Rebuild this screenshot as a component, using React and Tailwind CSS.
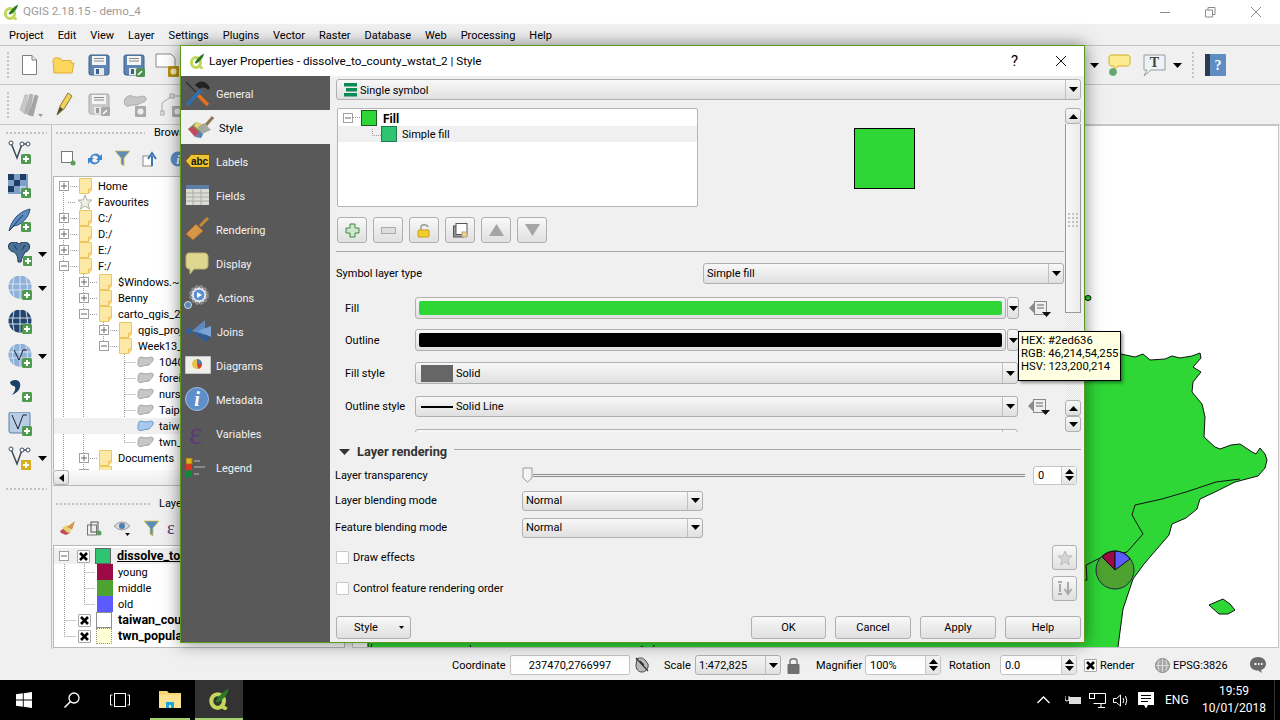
import React from 'react';

const S = ({ w, h, vb, className = '', children }) => (
  <svg width={w} height={h} viewBox={vb || `0 0 ${w} ${h}`} className={`shrink-0 ${className}`}>{children}</svg>
);
const Tri = ({ w = 9, h = 5, c = '#000', up }) => (
  <S w={w} h={h}><path d={up ? `M0 ${h}H${w}L${w / 2} 0Z` : `M0 0H${w}L${w / 2} ${h}Z`} fill={c} /></S>
);
const Plus = ({ x, y }) => (
  <g><rect x={x} y={y} width="10" height="10" rx="1.5" fill="#4e9a4e" /><path d={`M${x + 5} ${y + 2}v6M${x + 2} ${y + 5}h6`} stroke="#fff" strokeWidth="2" /></g>
);
const Grip = ({ className }) => (
  <div className={`bg-[radial-gradient(circle,#c2c2c2_1px,transparent_1.2px)] bg-[length:4px_4px] ${className}`} />
);
const Logo = ({ s = 16 }) => (
  <S w={s} h={s} vb="0 0 16 16">
    <ellipse cx="7" cy="9.500" rx="4.600" ry="5" fill="none" stroke="#c3d75a" strokeWidth="3" />
    <path d="M9 12.500l4.500 3" stroke="#c3d75a" strokeWidth="2.800" />
    <path d="M5.500 10C7 6.500 10.500 3 15 0.500C14.500 4.500 11.500 8 7.500 10.500Z" fill="#2a7a28" />
  </S>
);

/* toolbar icons */
const NewDoc = () => <S w={17} h={22}><path d="M1.500 1.500H11L15.500 6V20.500H1.500Z" fill="#fff" stroke="#7d7d7d" /><path d="M11 1.500V6H15.500" fill="#eee" stroke="#7d7d7d" /></S>;
const Folder = () => <S w={23} h={17}><path d="M1 3.500L2.500 1H8L10 3.500H19V6H22L20 16H2Z" fill="#fbd75b" stroke="#dcae30" /></S>;
const Save = ({ gray, badge }) => (
  <S w={23} h={23}>
    <rect x="1" y="1" width="20" height="20" rx="2" fill={gray ? '#c9c9c9' : '#5d86b6'} stroke={gray ? '#aaa' : '#3d5f88'} />
    <rect x="4" y="2" width="14" height="9" fill="#f4f4f4" /><path d="M6 4.500h10M6 7h10" stroke="#888" />
    <rect x="6" y="14" width="10" height="7" fill="#e8e8e8" /><rect x="8" y="15" width="3" height="5" fill={gray ? '#999' : '#3d5f88'} />
    {badge && <g><rect x="13" y="14" width="9" height="9" rx="1.500" fill={badge} /><path d="M15 21l4-4" stroke="#fff" strokeWidth="1.500" /></g>}
  </S>
);
const Composer = () => <S w={25} h={24}><path d="M1 1H16L20 5V14H1Z" fill="#fff" stroke="#888" /><rect x="13" y="13" width="11" height="11" rx="1" fill="#b78f12" /><circle cx="18.500" cy="18.500" r="3" fill="#f4e7b2" /></S>;
const Pencils = () => <S w={24} h={25}><path d="M1 18L6 3L9 3L6 22Z" fill="#c8c8c8" stroke="#aaa" strokeWidth="0.500" /><path d="M6 21L11 2L14 3L10 23Z" fill="#b5b5b5" stroke="#999" strokeWidth="0.500" /><path d="M10 23L16 3L19 4L14 24Z" fill="#a5a5a5" stroke="#888" strokeWidth="0.500" /><path d="M19 22h5l-2.500 3z" fill="#999" /></S>;
const Pencil = () => <S w={17} h={25}><path d="M1 23L4 14L12 1L16 4L8 17Z" fill="#f0d35c" stroke="#8a7a30" /><path d="M1 23L4 15L7 17Z" fill="#444" /></S>;
const Blob = ({ f = '#c6c6c6', s = '#a5a5a5', w = 17, h = 12 }) => <S w={w} h={h} vb="0 0 17 12"><path d="M2 2C5 0 6 2 9 2C12 2 14 0 16 2C17 5 14 6 13 8C12 10 8 9 6 10C3 11 1 11 1 8C1 6 1 4 2 2Z" fill={f} stroke={s} /></S>;
const GrayBlob = () => <S w={24} h={24}><path d="M2 6C5 1 9 3 12 4C16 5 21 1 23 5C24 9 19 9 16 11C13 13 9 11 6 13C3 14 0 11 2 6Z" fill="#c6c6c6" stroke="#aaa" /><rect x="12" y="13" width="11" height="11" rx="1" fill="#aaa" /><circle cx="17.500" cy="18.500" r="3" fill="#eee" /></S>;
const Poly = () => <S w={24} h={24}><path d="M2 20V10L12 3H20" fill="none" stroke="#aaa" /><rect x="0" y="18" width="4" height="4" fill="#ddd" stroke="#aaa" /><rect x="10" y="1" width="4" height="4" fill="#ddd" stroke="#aaa" /><rect x="12" y="13" width="11" height="11" rx="1" fill="#aaa" /><circle cx="17.500" cy="18.500" r="3" fill="#eee" /></S>;
const Note = () => <S w={23} h={23}><path d="M4 1H19C21 1 22 2 22 4V9C22 11 21 12 19 12H10L6 17V12H4C2 12 1 11 1 9V4C1 2 2 1 4 1Z" fill="#fbeb91" stroke="#d4ae24" /><circle cx="5" cy="18" r="3.500" fill="#6f9f72" stroke="#5b7" /></S>;
const TNote = () => <S w={23} h={23}><path d="M1 1H22V16H8L1 22L4 16H1Z" fill="#eef3f6" stroke="#9a9a9a" /><text x="11.500" y="13" textAnchor="middle" fontFamily="Liberation Serif" fontWeight="700" fontSize="14" fill="#444">T</text></S>;
const HelpBook = () => <S w={21} h={22}><rect x="0" y="0" width="21" height="22" rx="1" fill="#5f8dc2" /><rect width="5" height="22" fill="#2b3b50" /><text x="13" y="16" textAnchor="middle" fontSize="14" fontWeight="700" fontFamily="Liberation Serif" fill="#fff">?</text></S>;

/* left bar */
const VNode = ({ badge = true, star }) => <S w={24} h={24}><path d="M3 3L9 18L14 4H20" fill="none" stroke="#3a4a5a" strokeWidth="1.500" /><circle cx="3" cy="3" r="2" fill="#fff" stroke="#3a4a5a" /><circle cx="14" cy="4" r="2" fill="#fff" stroke="#3a4a5a" /><circle cx="20" cy="4" r="2" fill="#fff" stroke="#3a4a5a" />{badge && !star && <Plus x={13} y={14} />}{star && <g><rect x="13" y="14" width="10" height="10" fill="#d8ad1e" /><path d="M18 16v6M15 19h6" stroke="#fff" strokeWidth="2" /></g>}</S>;
const Raster = () => <S w={24} h={24}><rect x="0" y="0" width="20" height="20" fill="#7ea0c8" /><rect x="0" y="0" width="6" height="6" fill="#1f3d63" /><rect x="12" y="0" width="6" height="6" fill="#1f3d63" /><rect x="6" y="6" width="6" height="6" fill="#1f3d63" /><rect x="0" y="12" width="6" height="6" fill="#1f3d63" /><rect x="12" y="12" width="6" height="6" fill="#b8cbe3" /><Plus x={13} y={14} /></S>;
const Feather = () => <S w={24} h={24}><path d="M1 23C3 14 9 4 22 1C21 9 14 17 6 18Z" fill="#5d8ac0" stroke="#2d4e78" /><path d="M2 22L15 7" stroke="#1f3d63" /><Plus x={13} y={14} /></S>;
const Elephant = () => <S w={24} h={24}><path d="M1 2C4 -1 9 0 11 2C13 0 18 -1 21 2C23 6 20 10 17 10C16 13 14 14 13 20L10 20C10 14 8 12 6 10C3 10 -1 7 1 2Z" fill="#4a7096" stroke="#1f3a58" /><path d="M6 3L9 8M17 3L14 8" stroke="#1f3a58" fill="none" /><Plus x={15} y={14} /></S>;
const Globe = ({ light, v }) => <S w={24} h={24}><circle cx="12" cy="11" r="11.500" fill={light ? '#8fb0d8' : '#21456f'} /><path d="M1 8h22M1 14h22M12 0v22M6 1Q3 11 6 21M18 1Q21 11 18 21" fill="none" stroke={light ? '#e7eef6' : '#fff'} strokeWidth="0.800" />{v && <path d="M6 6L11 16L15 6H19" fill="none" stroke="#223" />}<Plus x={14} y={14} /></S>;
const Comma = () => <S w={24} h={24}><path d="M2 4C6 0 14 2 12 9C11 13 8 15 4 17C8 12 8 9 6 8C4 8 2 6 2 4Z" fill="#1c3f66" /><Plus x={14} y={14} /></S>;
const Mesh = () => <S w={24} h={24}><rect x="1" y="0" width="21" height="21" rx="2" fill="#b7cde4" stroke="#5a7fa8" /><path d="M4 3L10 17L15 3H19" fill="none" stroke="#223" /><Plus x={14} y={14} /></S>;

/* sidebar */
const IGeneral = () => <S w={26} h={26}><path d="M1 2L12 13" stroke="#333" strokeWidth="1.500" /><path d="M11 13L23 25" stroke="#e8701f" strokeWidth="3.500" /><path d="M2 25L16 10" stroke="#2f6fb0" strokeWidth="3.500" /><path d="M10 5C14 0 21 0 25 8L23 10C20 7 17 7 15 9Z" fill="#222" /></S>;
const IStyle = () => <S w={27} h={23}><path d="M1 13L9 6L20 10L14 22Z" fill="#6ea15e" /><path d="M1 13L6 10L12 16L8 21Z" fill="#c24a5f" /><path d="M9 6L17 9L13 14L7 10Z" fill="#e5d36b" /><path d="M8 21L13 15L16 18L14 22Z" fill="#5d7fb4" /><path d="M15 18L11 11L17 7L24 14Z" fill="#a6a8a2" /><path d="M19 9L26 1" stroke="#8a7a50" strokeWidth="3" /></S>;
const ILabels = () => <S w={25} h={14}><path d="M0.500 7L6 0.500H24.500V13.500H6Z" fill="#efc233" stroke="#6f5a12" /><text x="14.500" y="10.500" textAnchor="middle" fontSize="10" fontWeight="700" fontFamily="Liberation Sans" fill="#111">abc</text></S>;
const IFields = () => <S w={23} h={20}><rect width="23" height="20" fill="#ddddd6" /><rect width="23" height="4" fill="#5c7ea6" /><path d="M0 8h23M0 12h23M0 16h23M7 4v16M15 4v16" stroke="#aaa" /></S>;
const IRendering = () => <S w={24} h={24}><path d="M15 9L23 1" stroke="#c98a3a" strokeWidth="3" /><path d="M1 17L11 7L18 14L8 23Z" fill="#d7954a" stroke="#a5682a" /></S>;
const IDisplay = () => <S w={24} h={23}><path d="M4 1H19C22 1 23 3 23 5V13C23 16 21 17 19 17H9L5 22L5 17H4C2 17 1 15 1 13V5C1 3 2 1 4 1Z" fill="#e0d78e" stroke="#bfb56e" /></S>;
const IActions = () => <S w={26} h={25}><circle cx="15" cy="10" r="8.500" fill="#ddd" stroke="#888" strokeWidth="3" strokeDasharray="3 1.500" /><circle cx="15" cy="10" r="6" fill="#5c8fd0" stroke="#fff" /><path d="M13 7L18 10L13 13Z" fill="#fff" /><circle cx="4" cy="20" r="3.500" fill="#5c86b8" stroke="#cdd" /></S>;
const IJoins = () => <S w={26} h={24}><circle cx="3" cy="12" r="3" fill="#355f95" /><path d="M6 12L19 1V23Z" fill="#5d88c2" /><path d="M12 12L25 7V18Z" fill="#7da4d6" /><path d="M6 12L19 23L25 18Z" fill="#2f5a92" /></S>;
const IDiagrams = () => <S w={26} h={18}><rect width="26" height="18" fill="#efefea" stroke="#999" /><circle cx="12" cy="8" r="5" fill="#e6c24c" /><path d="M12 8V3A5 5 0 0 1 17 8Z" fill="#4f78b8" /><path d="M12 8H17A5 5 0 0 1 13 13Z" fill="#c9432f" /></S>;
const IMeta = () => <S w={24} h={24}><circle cx="12" cy="12" r="11.500" fill="#5f8fcb" stroke="#9dbde3" /><text x="12" y="19" textAnchor="middle" fontFamily="Liberation Serif" fontStyle="italic" fontWeight="700" fontSize="20" fill="#fff">i</text></S>;
const ILegend = () => <S w={19} h={19}><rect x="0" y="0" width="6" height="6" fill="#e0b020" stroke="#a58010" /><rect x="0" y="6" width="6" height="6" fill="#d8381c" /><rect x="0" y="13" width="6" height="6" fill="#0b8a3c" /><path d="M8 3h6M8 9h11M8 16h5" stroke="#8a8a8a" strokeWidth="2" /></S>;

const sideItems = [
  ['General', <IGeneral />, 'pl-[4px]', 'w-[35px]'],
  ['Style', <IStyle />, 'pl-[6px]', 'w-[38px]'],
  ['Labels', <ILabels />, 'pl-[4px]', 'w-[35px]'],
  ['Fields', <IFields />, 'pl-[5px]', 'w-[35px]'],
  ['Rendering', <IRendering />, 'pl-[4px]', 'w-[35px]'],
  ['Display', <IDisplay />, 'pl-[4px]', 'w-[35px]'],
  ['Actions', <IActions />, 'pl-[3px]', 'w-[36px]'],
  ['Joins', <IJoins />, 'pl-[5px]', 'w-[36px]'],
  ['Diagrams', <IDiagrams />, 'pl-[4px]', 'w-[35px]'],
  ['Metadata', <IMeta />, 'pl-[4px]', 'w-[35px]'],
  ['Variables', <span className="font-['Liberation_Serif',serif] text-[32px] leading-none text-[#5a3a78]">ε</span>, 'pl-[8px]', 'w-[35px]'],
  ['Legend', <ILegend />, 'pl-[5px]', 'w-[35px]'],
];

const btn = 'bg-linear-to-b from-[#f8f8f8] to-[#e0e0e0] border border-[#b0b0b0] rounded-[3px]';

const Combo = ({ className = '', children }) => (
  <div className={`flex items-center ${btn} ${className}`}>
    <div className="flex-1 flex items-center min-w-0 pl-[3px] pt-[2px] whitespace-nowrap overflow-hidden">{children}</div>
    <div className="w-[15px] h-full border-l border-[#c0c0c0] flex items-center justify-center"><Tri /></div>
  </div>
);
const Spin = ({ className = '', children }) => (
  <div className={`flex items-center bg-white border border-[#c4c4c4] rounded-[3px] ${className}`}>
    <div className="flex-1 pl-[4px] pt-[2px]">{children}</div>
    <div className="w-[15px] h-full border-l border-[#c8c8c8] bg-linear-to-b from-[#f8f8f8] to-[#e4e4e4] flex flex-col items-center justify-around py-[2px]">
      <Tri up /><Tri />
    </div>
  </div>
);
const Exp = ({ open }) => (
  <S w={10} h={10} className="mr-[0px]"><rect x="0.500" y="0.500" width="9" height="9" fill="#fff" stroke="#a0a0a0" /><path d={open ? 'M2 5h6' : 'M2 5h6M5 2v6'} stroke="#666" /></S>
);
const TreeFolder = () => <S w={13} h={16}><path d="M0.500 0.500H12.500V12L9.500 15.500H0.500Z" fill="#fde9a6" stroke="#ecc75e" /><path d="M9.500 15.500V11H12.500" fill="#f8d878" stroke="#ecc75e" /></S>;
const Star = () => <S w={16} h={16}><path d="M8 1L10 6H15L11 9.500L12.500 15L8 12L3.500 15L5 9.500L1 6H6Z" fill="#efefe6" stroke="#b0b0a0" /></S>;

const bRows = [
  ['Home', 0, '+'], ['Favourites', 0, 's'], ['C:/', 0, '+'], ['D:/', 0, '+'], ['E:/', 0, '+'], ['F:/', 0, '-'],
  ['$Windows.~BT', 1, '+'], ['Benny', 1, '+'], ['carto_qgis_2018', 1, '-'], ['qgis_project', 2, '+'], ['Week13_pie', 2, '-'],
  ['1040_population', 3, 'b'], ['foreign_workers', 3, 'b'], ['nursery_school', 3, 'b'], ['Taipei_metro', 3, 'b'], ['taiwan_county', 3, 'h'], ['twn_population', 3, 'b'],
  ['Documents', 1, '+'], ['Downloads', 1, '+'],
];
const bPad = ['pl-[5px]', 'pl-[25px]', 'pl-[45px]', 'pl-[83px]'];

const BrowserTree = () => (
  <div className="relative h-[294px] overflow-hidden bg-white border-t border-l border-[#b8b8b8] pt-[1px] ml-[1px] shrink-0">
    <svg width="300" height="294" className="absolute left-0 top-0" viewBox="54 177 300 294" fill="none" stroke="#9a9a9a" strokeDasharray="1 1">
      <path d="M63.500 190V262M63.500 272V470M68 186.500H78M68 202.500H76M68 218.500H78M68 234.500H78M68 250.500H78M68 266.500H78" />
      <path d="M83.500 272V470M88 282.500H98M88 298.500H98M88 314.500H98M88 458.500H98M103.500 320V350M108 330.500H118M108 346.500H118" />
      <path d="M124.500 352V442.500M124.500 362.500H136M124.500 378.500H136M124.500 394.500H136M124.500 410.500H136M124.500 426.500H136M124.500 442.500H136" />
    </svg>
    {bRows.map(([t, l, k]) => (
      <div key={t} className={`relative h-4 flex items-center whitespace-nowrap ${bPad[l]} ${k === 'h' ? 'bg-[#f0f0f0]' : ''}`}>
        {(k === '+' || k === '-') && <><Exp open={k === '-'} /><span className="ml-[10px]"><TreeFolder /></span><span className="ml-[6px] mt-[2px]">{t}</span></>}
        {k === 's' && <><span className="ml-[18px]"><Star /></span><span className="ml-[5px] mt-[2px]">{t}</span></>}
        {(k === 'b' || k === 'h') && <><Blob f={k === 'h' ? '#a9c9ec' : '#c6c6c6'} s={k === 'h' ? '#6a95c4' : '#a5a5a5'} /><span className="ml-[5px] mt-[2px]">{t}</span></>}
      </div>
    ))}
  </div>
);

const Check = () => (
  <span className="w-[13px] h-[13px] border border-[#a8a8a8] bg-white flex items-center justify-center shrink-0 rounded-[1px]">
    <S w={9} h={9}><path d="M1 1L8 8M8 1L1 8" stroke="#000" strokeWidth="2.600" /></S>
  </span>
);

const lRows = [
  ['dissolve_to_county_wstat_2', 'top'], ['young', 'l', 'bg-[#9b0a45]'], ['middle', 'l', 'bg-[#4ea22f]'], ['old', 'l', 'bg-[#5b5bff]'],
  ['taiwan_county', 'c', 'bg-white border border-[#8f8f8f]'], ['twn_population', 'c', 'bg-[#ffffd8] border border-dotted border-[#8f8f8f]'],
];
const LayerTree = () => (
  <div className="relative h-[103px] overflow-hidden bg-white border border-[#b8b8b8] pt-[2px] ml-[1px] shrink-0">
    <svg width="120" height="104" className="absolute left-0 top-0" viewBox="54 546 120 104" fill="none" stroke="#9a9a9a" strokeDasharray="1 1">
      <path d="M64.500 562V636.500M64.500 620.500H76M64.500 636.500H76M69 556.500H77M84.500 562V604.500M84.500 572.500H95M84.500 588.500H95M84.500 604.500H95" />
    </svg>
    {lRows.map(([t, k, c]) => (
      <div key={t} className={`relative h-4 flex items-center whitespace-nowrap ${k === 'top' ? 'bg-[#f0f0f0]' : ''}`}>
        {k === 'top' && <><span className="ml-[5px]"><Exp open /></span><span className="ml-[8px]"><Check /></span><span className="ml-[5px] w-4 h-4 bg-[#2fc472] border border-[#666] shrink-0" /><span className="ml-[6px] font-bold underline text-[12.500px]">{t}</span></>}
        {k === 'l' && <><span className={`ml-[43px] w-4 h-4 shrink-0 ${c}`} /><span className="ml-[5px] mt-[2px]">{t}</span></>}
        {k === 'c' && <><span className="ml-[24px]"><Check /></span><span className={`ml-[5px] w-4 h-4 shrink-0 ${c}`} /><span className="ml-[6px] font-bold text-[12.500px]">{t}</span></>}
      </div>
    ))}
  </div>
);

const MapCanvas = () => (
  <div className="flex-1 bg-white border border-[#c4c4c4] mr-[1px] ml-[7px] mb-px overflow-hidden">
    <svg width="925" height="524" viewBox="353 124 925 524" className="block">
      <path d="M368 660L368 600L700 340L1084 356L1121 352L1135 355L1143 352L1150 358L1165 357L1172 354L1180 356L1192 354L1200 351L1201 356L1193 365L1201 370L1193 380L1192 390L1202 402L1205 415L1204 435L1215 445L1220 447L1231 443L1240 442L1252 450L1256 452L1260 446L1265 452L1267 458L1265 466L1258 474L1235 480L1215 490L1200 497L1197 507L1186 516L1172 522L1169 533L1156 548L1144 562L1133 577L1123 607L1116 660Z" fill="#2ed636" stroke="#111" />
      <path d="M1240 477L1216 480L1186 490L1162 497L1135 503L1132 513L1143 532L1127 550L1102 555L1086 563L1087 578L1083 578" fill="none" stroke="#111" />
      <path d="M1209 603L1216 600L1223 597L1230 602L1235 608L1228 612L1219 612Z" fill="#2ed636" stroke="#111" />
      <ellipse cx="1088" cy="296" rx="3" ry="2.500" fill="#2ed636" stroke="#111" />
      <path d="M472 648l-2-5M635 648l8-4M653 648l1-5M370 648l2-6" fill="none" stroke="#111" />
      <circle cx="1115" cy="568" r="19" fill="#4ea22f" stroke="#224" />
      <path d="M1115 568L1102 555A19 19 0 0 1 1115 549Z" fill="#9b0a45" stroke="#111" />
      <path d="M1115 568V549A19 19 0 0 1 1130 557Z" fill="#5b5bff" stroke="#111" />
    </svg>
  </div>
);

const Row = ({ label, labelClass = 'pl-[9px] w-[79px]', children, className = '' }) => (
  <div className={`flex items-center ${className}`}>
    <span className={`shrink-0 mt-[2px] ${labelClass}`}>{label}</span>{children}
  </div>
);
const DD = () => (
  <S w={24} h={17} className="ml-[9px]"><path d="M1 8L7 2V14Z" fill="#8a8a8a" /><rect x="6.500" y="1.500" width="12" height="13" fill="#eee" stroke="#888" /><path d="M9 5h7M9 8h7" stroke="#666" /><path d="M14 12h9l-4.500 5z" fill="#111" /></S>
);
const ColorBtn = ({ c }) => (
  <>
    <div className={`w-[591px] h-[22px] p-[3px] ${btn}`}><div className={`h-full rounded-[2px] ${c}`} /></div>
    <div className={`ml-[1px] w-[12px] h-[22px] flex items-center justify-center ${btn}`}><Tri /></div>
    <DD />
  </>
);
const ToolBtn = ({ children }) => (
  <div className={`w-[30px] h-[26px] flex items-center justify-center ${btn}`}>{children}</div>
);
const Btn = ({ children, className = '' }) => (
  <div className={`h-[23px] flex items-center justify-center pt-[2px] ${btn} ${className}`}>{children}</div>
);

const Dialog = () => (
  <div className="absolute left-[180px] top-[45px] w-[905px] h-[598px] border border-[#5c9a1e] bg-[#f0f0f0] shadow-[0_0_16px_rgba(0,0,0,0.5)] flex flex-col">
    <div className="h-[30px] bg-white flex items-center shrink-0">
      <span className="ml-[8px]"><Logo /></span>
      <span className="ml-[4px] text-[11.700px] mt-[2px]">Layer Properties - dissolve_to_county_wstat_2 | Style</span>
      <span className="ml-auto mr-[37px] text-[15px]">?</span>
      <S w={12} h={12} className="mr-[17px]"><path d="M1 1L11 11M11 1L1 11" stroke="#111" /></S>
    </div>
    <div className="flex-1 flex min-h-0">
      <div className="w-[149px] bg-[#595959] shrink-0">
        {sideItems.map(([t, ic, pad, w]) => (
          <div key={t} className={`h-[34px] flex items-center ${t === 'Style' ? 'bg-[#f0f0f0] text-black' : 'text-[#f2f2f2]'}`}>
            <div className={`flex items-center shrink-0 h-full ${pad} ${w}`}>{ic}</div><span className="mt-[4px]">{t}</span>
          </div>
        ))}
      </div>
      <div className="flex-1 flex flex-col pl-[6px] pr-[3px] min-w-0">
        <div className={`mt-[3px] h-[21px] flex items-center ${btn}`}>
          <div className="flex-1 flex items-center pl-[7px]">
            <S w={13} h={14}><path d="M0 0h13v3.500H0zM2 5h11v3.500H2zM0 10h13v3.500H0z" fill="#0a8a55" /></S>
            <span className="ml-[3px] mt-[3px]">Single symbol</span>
          </div>
          <div className="w-[15px] h-full border-l border-[#c0c0c0] flex items-center justify-center"><Tri /></div>
        </div>
        {/* scroll area */}
        <div className="mt-[8px] h-[324px] flex shrink-0">
          <div className="w-[729px] flex flex-col overflow-hidden">
            <div className="flex h-[99px] shrink-0">
              <div className="w-[361px] ml-[1px] bg-white border border-[#b4b4b4] rounded-[2px] pt-[1px] relative">
                <div className="h-4 flex items-center">
                  <span className="ml-[5px]"><Exp open /></span>
                  <S w={8} h={4}><path d="M0 1.500h8" stroke="#999" strokeDasharray="1 1" /></S>
                  <span className="w-4 h-4 bg-[#2ed636] border border-[#1c5a20]" />
                  <span className="ml-[6px] mt-[1px] font-bold text-[12px]">Fill</span>
                </div>
                <div className="h-4 flex items-center bg-[#f0f0f0]">
                  <S w={9} h={10} className="ml-[34px]"><path d="M0.500 0V6.500H9" stroke="#999" strokeDasharray="1 1" fill="none" /></S>
                  <span className="w-4 h-4 bg-[#2fc472] border border-[#1f7a50]" />
                  <span className="ml-[5px] mt-[2px]">Simple fill</span>
                </div>
              </div>
              <div className="ml-[156px] mt-[20px] w-[61px] h-[61px] bg-[#2ed636] border border-black" />
            </div>
            <div className="mt-[10px] flex gap-[6px] ml-[1px] shrink-0">
              <ToolBtn><S w={15} h={15}><path d="M5 1h5v4h4v5h-4v4H5v-4H1V5h4Z" fill="#cfe6cf" stroke="#3f8a3f" /></S></ToolBtn>
              <ToolBtn><S w={15} h={7}><rect x="0.500" y="0.500" width="14" height="6" fill="#ddd" stroke="#aaa" /></S></ToolBtn>
              <ToolBtn><S w={14} h={15}><path d="M4 7V4C4 1 10 1 11 4" fill="none" stroke="#999" strokeWidth="1.500" /><rect x="1" y="7" width="11" height="7" rx="1" fill="#f3cc2e" stroke="#c79d16" /></S></ToolBtn>
              <ToolBtn><S w={15} h={15}><rect x="0.500" y="3" width="10" height="11" fill="#999" stroke="#555" /><rect x="3" y="0.500" width="11" height="11" fill="#fff" stroke="#555" /><rect x="9" y="9" width="5" height="5" fill="#efd674" stroke="#b99" /></S></ToolBtn>
              <ToolBtn><S w={15} h={12}><path d="M7.500 0L15 12H0Z" fill="#a5a5a5" /></S></ToolBtn>
              <ToolBtn><S w={15} h={12}><path d="M7.500 12L15 0H0Z" fill="#a5a5a5" /></S></ToolBtn>
            </div>
            <div className="mt-[8px] h-px bg-[#a8a8a8] shrink-0" />
            <Row label="Symbol layer type" labelClass="w-[367px]" className="mt-[11px] h-[21px] shrink-0">
              <Combo className="w-[361px] h-[21px]">Simple fill</Combo>
            </Row>
            <Row label="Fill" className="mt-[13px] h-[22px] shrink-0"><ColorBtn c="bg-[#2ed636]" /></Row>
            <Row label="Outline" className="mt-[10px] h-[22px] shrink-0"><ColorBtn c="bg-black" /></Row>
            <Row label="Fill style" className="mt-[11px] h-[22px] shrink-0">
              <Combo className="w-[603px] h-[22px]"><span className="w-[32px] h-[17px] bg-[#666] ml-[2px] mr-[3px] -mt-[2px]" />Solid</Combo>
            </Row>
            <Row label="Outline style" className="mt-[12px] h-[21px] shrink-0">
              <Combo className="w-[603px] h-[21px]"><span className="w-[32px] h-[2px] bg-black ml-[2px] mr-[3px] -mt-[2px]" />Solid Line</Combo>
              <DD />
            </Row>
            <Row label="" className="mt-[12px] h-[21px] shrink-0"><Combo className="w-[603px] h-[21px]">&nbsp;</Combo></Row>
          </div>
          {/* scrollbar */}
          <div className="w-[16px] ml-[1px] flex flex-col shrink-0">
            <div className={`h-[16px] flex items-center justify-center ${btn}`}><Tri up /></div>
            <div className="h-[189px] w-full bg-linear-to-r from-[#f8f8f8] to-[#ebebeb] border-x border-b border-[#999] flex items-end justify-center pb-[84px]">
              <Grip className="w-[12px] h-[16px]" />
            </div>
            <div className="flex-1 bg-[repeating-conic-gradient(#e4e4e4_0_25%,#f6f6f6_0_50%)] bg-[length:2px_2px]" />
            <div className={`h-[16px] flex items-center justify-center ${btn}`}><Tri up /></div>
            <div className={`h-[16px] flex items-center justify-center ${btn}`}><Tri /></div>
          </div>
        </div>
        {/* layer rendering */}
        <div className="mt-[12px] h-[16px] flex items-center shrink-0 -ml-[3px]">
          <span className="ml-[6px]"><Tri w={11} h={6} c="#333" /></span>
          <span className="ml-[7px] font-bold text-[#333] text-[12.800px]">Layer rendering</span>
          <div className="ml-[7px] flex-1 h-px bg-[#a8a8a8] -mt-[6px]" />
        </div>
        <div className="flex flex-col -ml-[1px] shrink-0">
          <Row label="Layer transparency" labelClass="w-[187px]" className="mt-[5px] h-[20px]">
            <S w={11} h={16}><path d="M1 1H10V11L5.500 15L1 11Z" fill="#f4f4f4" stroke="#9a9a9a" /></S>
            <div className="w-[492px] h-[3px] border-y border-[#8f8f8f] bg-[#eee]" />
            <Spin className="ml-[8px] w-[44px] h-[19px]">0</Spin>
          </Row>
          <Row label="Layer blending mode" labelClass="w-[187px]" className="mt-[5px] h-[21px]">
            <Combo className="w-[181px] h-[20px]">Normal</Combo>
          </Row>
          <Row label="Feature blending mode" labelClass="w-[187px]" className="mt-[6px] h-[21px]">
            <Combo className="w-[181px] h-[20px]">Normal</Combo>
          </Row>
          <div className="mt-[7px] h-[25px] flex items-center">
            <span className="ml-[1px] w-[13px] h-[13px] border border-[#c8c8c8] bg-white rounded-[1px]" />
            <span className="ml-[4px] mt-[2px]">Draw effects</span>
            <div className={`ml-auto mr-[4px] w-[25px] h-[25px] flex items-center justify-center ${btn}`}>
              <S w={14} h={14}><path d="M7 0L9 5H14L10 8.500L11.500 14L7 11L2.500 14L4 8.500L0 5H5Z" fill="#d4d4d4" stroke="#bbb" /></S>
            </div>
          </div>
          <div className="mt-[6px] h-[25px] flex items-center">
            <span className="ml-[1px] w-[13px] h-[13px] border border-[#c8c8c8] bg-white rounded-[1px]" />
            <span className="ml-[4px] mt-[2px]">Control feature rendering order</span>
            <div className={`ml-auto mr-[4px] w-[25px] h-[25px] flex items-center justify-center ${btn}`}>
              <S w={15} h={15}><path d="M1 1h4M1 13h4" stroke="#aaa" strokeWidth="2" /><path d="M3 3v8" stroke="#aaa" strokeWidth="2" /><path d="M11 1v10M7.500 8l3.500 5 3.500-5" fill="none" stroke="#aaa" strokeWidth="2" /></S>
            </div>
          </div>
        </div>
        <div className="mt-[15px] flex items-center shrink-0">
          <Btn className="w-[75px] relative"><span className="-ml-[15px]">Style</span><span className="absolute right-[6px] top-[9px]"><Tri w={5} h={3} /></span></Btn>
          <Btn className="ml-[340px] w-[75px] border-[#6a6a6a]">OK</Btn>
          <Btn className="ml-[9px] w-[76px]">Cancel</Btn>
          <Btn className="ml-[9px] w-[76px]">Apply</Btn>
          <Btn className="ml-[9px] w-[76px]">Help</Btn>
        </div>
      </div>
    </div>
  </div>
);

const menu = ['Project', 'Edit', 'View', 'Layer', 'Settings', 'Plugins', 'Vector', 'Raster', 'Database', 'Web', 'Processing', 'Help'];
const leftIcons = [
  [<VNode />], [<Raster />], [<Feather />], [<Elephant />, 1], [<Globe light />, 1], [<Globe />], [<Globe light v />, 1], [<Comma />], [<Mesh />], [<VNode star />, 1],
];

export default function App() {
  return (
    <div className="relative w-[1280px] h-[720px] overflow-hidden flex flex-col bg-[#f0f0f0] text-black text-[11px] font-['Roboto',sans-serif]">
      {/* title bar */}
      <div className="h-6 bg-white flex items-center shrink-0">
        <span className="ml-[3px]"><Logo /></span>
        <span className="ml-[4px] text-[#9a9a9a] text-[11.600px]">QGIS 2.18.15 - demo_4</span>
        <div className="ml-auto flex items-center mr-[18px]">
          <S w={11} h={11}><path d="M0 5.500H10" stroke="#8a8a8a" /></S>
          <S w={11} h={11} className="ml-[34px]"><path d="M0.500 3H7.500V10H0.500ZM3 3V0.500H10V7.500H7.500" fill="none" stroke="#8a8a8a" /></S>
          <S w={12} h={12} className="ml-[34px]"><path d="M1 1L11 11M11 1L1 11" stroke="#8a8a8a" /></S>
        </div>
      </div>
      {/* menu */}
      <div className="h-[21px] flex items-center gap-[14px] pl-[9px] pt-[3px] shrink-0">
        {menu.map((m) => <span key={m}>{m}</span>)}
      </div>
      {/* toolbar 1 */}
      <div className="h-[40px] border-y border-[#c4c4c4] flex items-center shrink-0">
        <Grip className="ml-[6px] w-[5px] h-[28px]" />
        <span className="ml-[10px]"><NewDoc /></span>
        <span className="ml-[14px]"><Folder /></span>
        <span className="ml-[13px]"><Save /></span>
        <span className="ml-[12px]"><Save badge="#4f8f4f" /></span>
        <span className="ml-[9px]"><Composer /></span>
        <div className="ml-auto flex items-center mr-[54px]">
          <Tri />
          <span className="ml-[9px]"><Note /></span>
          <span className="ml-[12px]"><TNote /></span>
          <span className="ml-[7px]"><Tri /></span>
          <Grip className="ml-[9px] w-[5px] h-[28px]" />
          <span className="ml-[9px]"><HelpBook /></span>
        </div>
      </div>
      {/* toolbar 2 */}
      <div className="h-[39px] flex items-center shrink-0">
        <Grip className="ml-[6px] w-[5px] h-[28px]" />
        <span className="ml-[8px]"><Pencils /></span>
        <span className="ml-[13px]"><Pencil /></span>
        <span className="ml-[15px]"><Save gray badge="#a8a8a8" /></span>
        <span className="ml-[12px]"><GrayBlob /></span>
        <span className="ml-[13px]"><Poly /></span>
      </div>
      {/* main */}
      <div className="flex-1 flex min-h-0 border-t border-[#c8c8c8]">
        <div className="w-[52px] shrink-0 border-r border-[#c0c0c0] flex flex-col pt-[6px]">
          <Grip className="ml-[5px] w-[42px] h-[4px]" />
          {leftIcons.map(([ic, arrow], i) => (
            <div key={i} className="h-[34px] flex items-center pl-[8px] shrink-0">
              {ic}{arrow && <span className="ml-[6px]"><Tri w={9} h={5} /></span>}
            </div>
          ))}
          <Grip className="ml-[5px] mt-[12px] w-[42px] h-[4px]" />
        </div>
        <div className="w-[293px] shrink-0 flex flex-col">
          <div className="h-[20px] flex items-center pb-[4px] shrink-0">
            <Grip className="ml-[3px] w-[90px] h-[4px]" /><span className="ml-[9px]">Browser</span>
          </div>
          <div className="h-[31px] flex items-center pb-[4px] shrink-0">
            <span className="ml-[9px]"><S w={15} h={15}><rect x="0.500" y="0.500" width="11" height="11" fill="#fff" stroke="#777" /><circle cx="12" cy="12" r="2.500" fill="#5aa05a" /></S></span>
            <span className="ml-[11px]"><S w={16} h={16}><path d="M3 8A5.500 5.500 0 0 1 13 5L15 3V9H9L11 7A3 3 0 0 0 5 8Z" fill="#3c86cf" /><path d="M13 8A5.500 5.500 0 0 1 3 11L1 13V7H7L5 9A3 3 0 0 0 11 8Z" fill="#3c86cf" /></S></span>
            <span className="ml-[12px]"><S w={16} h={17}><path d="M0 1H15L9 8V16L6 14V8Z" fill="#5d8bb8" stroke="#d9c54f" strokeWidth="0.800" /></S></span>
            <span className="ml-[11px]"><S w={17} h={16}><rect x="1" y="5" width="9" height="10" fill="#fff" stroke="#888" /><path d="M10 15V5M6 8L10 2L14 8" fill="none" stroke="#3c76b5" strokeWidth="2" /></S></span>
            <span className="ml-[11px]"><S w={16} h={16}><circle cx="8" cy="8" r="7.500" fill="#5f8fcb" /><text x="8" y="13" textAnchor="middle" fontFamily="Liberation Serif" fontStyle="italic" fontWeight="700" fontSize="13" fill="#fff">i</text></S></span>
          </div>
          <BrowserTree />
          <div className="h-[16px] ml-[1px] flex items-center bg-[#e8e8e8] border-b border-[#b8b8b8] shrink-0">
            <div className={`w-[16px] h-full flex items-center justify-center ${btn}`}><S w={5} h={8}><path d="M5 0V8L0 4Z" fill="#000" /></S></div>
            <div className="flex-1 h-full bg-linear-to-b from-[#fafafa] to-[#ececec]" />
          </div>
          <div className="mt-[15px] h-[6px] flex items-center shrink-0"><Grip className="ml-[3px] w-[95px] h-[4px]" /><span className="ml-[9px]">Layers</span></div>
          <div className="h-[38px] flex items-center pt-[4px] shrink-0">
            <span className="ml-[8px]"><S w={16} h={16}><path d="M0 11L6 7L10 13L6 15L1 13Z" fill="#c24a5f" /><path d="M2 8L7 5L11 12L8 13Z" fill="#e5d36b" /><path d="M7 7L15 1L12 10Z" fill="#d7954a" /></S></span>
            <span className="ml-[11px]"><S w={15} h={16}><rect x="0.500" y="5" width="9" height="10" fill="#eee" stroke="#777" /><rect x="4" y="2" width="7" height="10" fill="none" stroke="#555" /><circle cx="12" cy="13" r="2.500" fill="#5aa05a" /></S></span>
            <span className="ml-[12px]"><S w={16} h={16}><path d="M0 6Q8 -2 16 6Q8 14 0 6Z" fill="#ddd" stroke="#999" /><circle cx="8" cy="6" r="3" fill="#4d7fb5" /><path d="M11 13h5l-2.500 3z" fill="#111" /></S></span>
            <span className="ml-[14px]"><S w={16} h={17}><path d="M0 1H15L9 8V16L6 14V8Z" fill="#5d8bb8" stroke="#d9c54f" strokeWidth="0.800" /></S></span>
            <span className="ml-[7px] text-[18px] leading-none text-[#5a3a78] font-['Liberation_Serif',serif]">ε</span>
          </div>
          <LayerTree />
        </div>
        <MapCanvas />
      </div>
      {/* status bar */}
      <div className="h-[31px] flex items-center pt-[1px] shrink-0">
        <span className="ml-[452px] w-[58px] mt-[2px]">Coordinate</span>
        <div className="w-[120px] h-[20px] pt-[2px] bg-white border border-[#c4c4c4] rounded-[2px] flex items-center justify-center">237470,2766997</div>
        <span className="ml-[4px] w-[16px]"><S w={16} h={16}><path d="M3 2C6 0 9 1 11 3L14 7C15 11 12 15 8 15C4 15 2 12 2 8Z" fill="#bbb" stroke="#444" /><path d="M2 1L14 14M6 4l4 4" stroke="#333" strokeWidth="1.200" /></S></span>
        <span className="ml-[14px] w-[31px] mt-[2px]">Scale</span>
        <Combo className="w-[86px] h-[20px]">1:472,825</Combo>
        <span className="ml-[6px]"><S w={13} h={17}><path d="M3 7V4C3 1 10 1 10 4V7" fill="none" stroke="#777" strokeWidth="1.500" /><rect x="0.500" y="7" width="12" height="10" rx="1" fill="#6f6f6f" /></S></span>
        <span className="ml-[16px] w-[49px] mt-[2px]">Magnifier</span>
        <Spin className="w-[76px] h-[20px]">100%</Spin>
        <span className="ml-[8px] w-[51px] mt-[2px]">Rotation</span>
        <Spin className="w-[77px] h-[20px]">0.0</Spin>
        <span className="ml-[7px]"><Check /></span>
        <span className="ml-[3px] w-[36px] mt-[2px]">Render</span>
        <span className="ml-[19px]"><S w={15} h={15}><circle cx="7.500" cy="7.500" r="7" fill="#aaa" stroke="#888" /><path d="M1 7.500h13M7.500 1v13M4 2Q2 7.500 4 13M11 2Q13 7.500 11 13" fill="none" stroke="#eee" strokeWidth="0.700" /></S></span>
        <span className="ml-[3px] w-[54px] mt-[2px]">EPSG:3826</span>
        <span className="ml-[23px]"><S w={16} h={16}><path d="M8 0C13 0 16 3 16 7C16 10 14 12 11 13L12 16L8 13.500C3 13.500 0 11 0 7C0 3 3 0 8 0Z" fill="#6a6a6a" /><path d="M4.500 7h2M8 7h1.500M11 7h1.500" stroke="#fff" strokeWidth="2" /></S></span>
      </div>
      {/* taskbar */}
      <div className="h-10 bg-black flex items-center shrink-0 text-white text-[12px] relative">
        <span className="ml-[16px]"><S w={16} h={16}><path d="M0 2.300L6.800 1.300V7.600H0ZM7.700 1.200L16 0V7.600H7.700ZM0 8.400H6.800V14.700L0 13.700ZM7.700 8.400H16V16L7.700 14.800Z" fill="#fff" /></S></span>
        <span className="ml-[32px]"><S w={16} h={16}><circle cx="10" cy="6" r="5" fill="none" stroke="#fff" strokeWidth="1.300" /><path d="M6.500 9.500L0.500 15.500" stroke="#fff" strokeWidth="1.500" /></S></span>
        <span className="ml-[30px]"><S w={20} h={14}><rect x="4.500" y="0.500" width="11" height="13" fill="none" stroke="#fff" /><path d="M2.500 2H0.500V12H2.500M17.500 2H19.500V12H17.500" fill="none" stroke="#fff" /></S></span>
        <div className="ml-[20px] w-[40px] h-full flex items-center justify-center border-b-[2px] border-[#a4cf6d]">
          <S w={22} h={18}><path d="M0 1H8L10 3H22V18H0Z" fill="#f7d774" /><path d="M0 5H22V18H0Z" fill="#fbe28f" /><path d="M7 18V12H15V18H12V15H10V18Z" fill="#19a4e8" /></S>
        </div>
        <div className="ml-[5px] w-[48px] h-full flex items-center justify-center bg-[#333] border-b-[2px] border-[#a4cf6d]"><Logo s={22} /></div>
        <div className="ml-auto flex items-center mr-[5px]">
          <S w={13} h={8} className="mr-[15px]"><path d="M0.500 7L6.500 1L12.500 7" fill="none" stroke="#fff" strokeWidth="1.300" /></S>
          <S w={16} h={12}><rect x="4" y="3" width="12" height="7" fill="#ddd" /><path d="M0 2v3a1 1 0 0 0 4 0V2" fill="none" stroke="#fff" /></S>
          <S w={17} h={15} className="ml-[8px]"><path d="M4.500 0.500H16.500V10.500H4.500M9 14.500H16M12 10.500V14.500" fill="none" stroke="#fff" /><rect x="0.500" y="0.500" width="5" height="5" fill="#000" stroke="#fff" /></S>
          <S w={16} h={13} className="ml-[7px]"><path d="M0.500 4.500H3.500L7.500 1V12L3.500 8.500H0.500Z" fill="none" stroke="#fff" /><path d="M10 4Q11.500 6.500 10 9M12.500 2Q15 6.500 12.500 11" fill="none" stroke="#fff" /></S>
          <S w={16} h={17} className="ml-[9px]"><path d="M0 0H16V13H10L8 16.500L6 13H0Z" fill="#fff" /><path d="M3 3.500H13M3 6.500H13M3 9.500H10" stroke="#000" /></S>
          <span className="ml-[11px] w-[23px]">ENG</span>
          <div className="ml-[17px] flex flex-col items-center leading-[17px] w-[58px]"><span>19:59</span><span>10/01/2018</span></div>
          <div className="ml-[11px] w-px h-[40px] bg-[#333]" />
        </div>
      </div>
      <Dialog />
      {/* tooltip */}
      <div className="absolute left-[1018px] top-[331px] w-[103px] h-[50px] bg-[#ffffe1] border border-black shadow-[2px_2px_3px_rgba(0,0,0,0.4)] pl-[2px] pt-[2px] leading-[13px] text-[11.300px] whitespace-nowrap">
        <div>HEX: #2ed636</div><div>RGB: 46,214,54,255</div><div>HSV: 123,200,214</div>
      </div>
    </div>
  );
}
